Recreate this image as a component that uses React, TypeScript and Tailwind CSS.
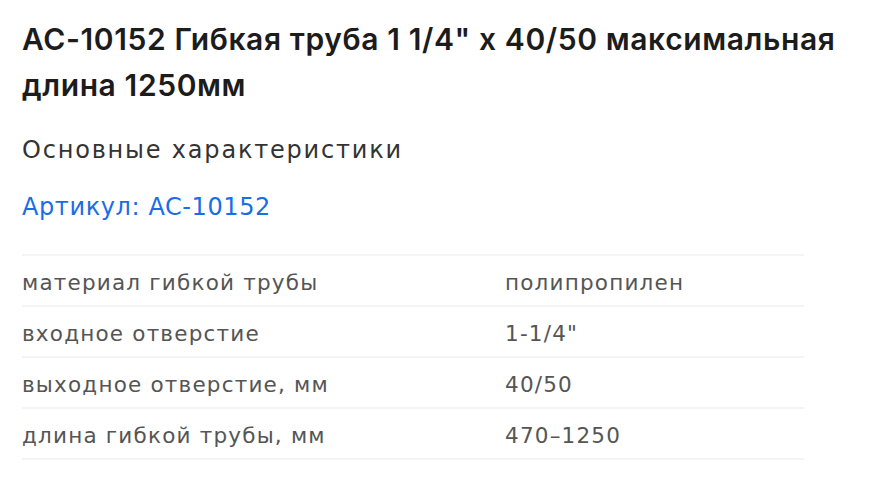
import React from 'react';

const specs = [
  { name: 'материал гибкой трубы', value: 'полипропилен' },
  { name: 'входное отверстие', value: '1-1/4"' },
  { name: 'выходное отверстие, мм', value: '40/50' },
  { name: 'длина гибкой трубы, мм', value: '470–1250' },
];

const App: React.FC = () => {
  return (
    <div className="min-h-screen bg-white px-[22px] pt-[16px]" style={{ fontFamily: '"DejaVu Sans", sans-serif' }}>
      {/* Title */}
      <h1
        className="w-[840px] text-[30px] font-semibold leading-[46px] tracking-[0.6px] text-[#1c1c1c]"
        style={{ fontFamily: 'Inter, "Noto Sans", sans-serif' }}
      >
        AC-10152 Гибкая труба 1 1/4" x 40/50 максимальная длина 1250мм
      </h1>

      <div className="mt-[26px] text-[24px] leading-[32px] tracking-[1.8px] text-[#333333]">Основные характеристики</div>

      <div className="mt-[25px] text-[24px] leading-[32px] tracking-[0.6px] text-[#1a6de6]">Артикул: AC-10152</div>

      {/* Specs table */}
      <div className="mt-[31px] w-[782px] border-t-2 border-[#f4f4f4]">
        {specs.map((s) => (
          <div
            key={s.name}
            className="flex h-[51px] items-center border-b-2 border-[#f4f4f4] pt-[5px] text-[21.5px] tracking-[1.2px] text-[#555555]"
          >
            <div className="w-[483px]">{s.name}</div>
            <div>{s.value}</div>
          </div>
        ))}
      </div>
    </div>
  );
};

export default App;
